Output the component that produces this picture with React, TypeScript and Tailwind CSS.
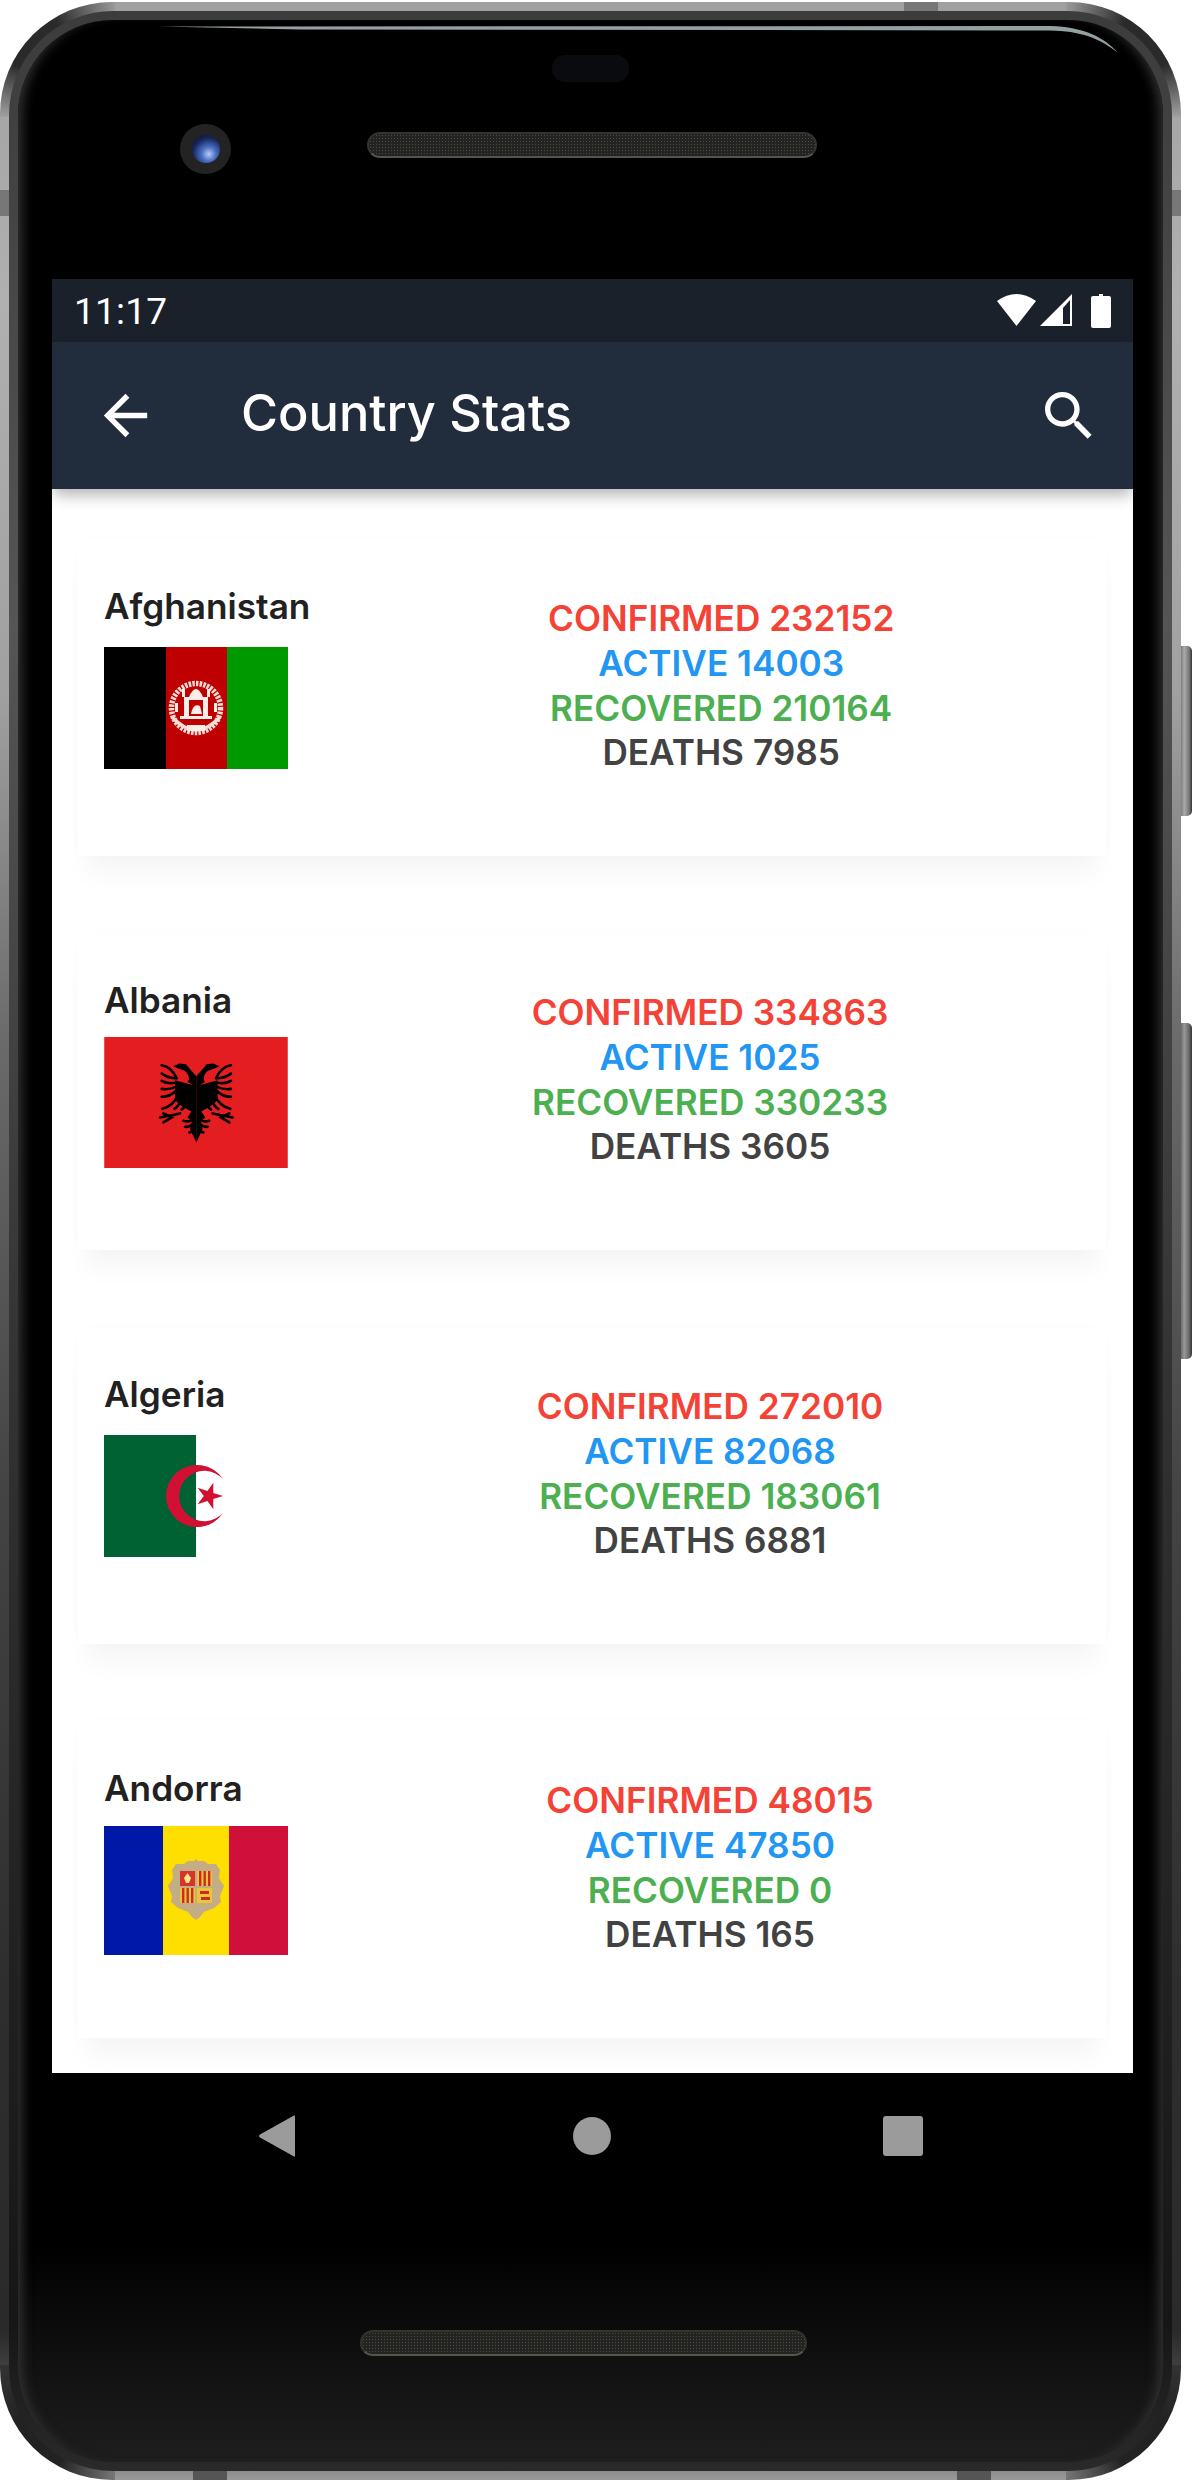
import React from "react";

const countries = [
  { name: "Afghanistan", c: 232152, a: 14003, r: 210164, d: 7985, flag: "af" },
  { name: "Albania", c: 334863, a: 1025, r: 330233, d: 3605, flag: "al" },
  { name: "Algeria", c: 272010, a: 82068, r: 183061, d: 6881, flag: "dz" },
  { name: "Andorra", c: 48015, a: 47850, r: 0, d: 165, flag: "ad" },
];

function FlagAF() {
  return (
    <svg viewBox="0 0 184 122" className="block w-[184px] h-[122px]">
      <rect width="62" height="122" fill="#000" />
      <rect x="62" width="61" height="122" fill="#bf0000" />
      <rect x="123" width="61" height="122" fill="#009900" />
      <g fill="none" stroke="#f6dcd4">
        <circle cx="92" cy="61" r="24.5" strokeWidth="5.5" strokeDasharray="2.5 1.2" />
        <path d="M68 70 Q92 96 116 70" strokeWidth="3.5" />
      </g>
      <g fill="#fbeee8">
        <rect x="80" y="50" width="24" height="3" />
        <rect x="80" y="53" width="5" height="16" />
        <rect x="99" y="53" width="5" height="16" />
        <path d="M85 50 Q92 34 99 50Z" />
        <rect x="78" y="42" width="3" height="8" />
        <rect x="103" y="42" width="3" height="8" />
        <rect x="76" y="69" width="32" height="3" />
        <path d="M87 67 Q89 56 96 59 L98 67Z" />
        <rect x="71" y="56" width="3" height="9" />
        <rect x="110" y="56" width="3" height="9" />
        <rect x="83" y="78" width="18" height="6" />
      </g>
    </svg>
  );
}

const eagleStrokes = [
  "M245 133 C262 136 280 150 290 172",
  "M245 158 C262 170 275 172 288 172",
  "M245 180 C262 190 275 188 288 185",
  "M245 204 C262 208 278 202 288 198",
  "M245 228 C262 228 280 218 290 208",
  "M247 264 C268 260 285 242 292 226",
  "M240 290 L300 278",
  "M250 278 L275 290 L250 305",
  "M310 300 C325 305 335 300 342 290",
  "M315 318 C328 320 338 310 344 302",
  "M328 335 C338 335 342 325 346 315",
  "M283 264 C290 262 298 250 300 242",
  "M305 266 C312 262 318 252 320 245",
];

function EagleHalf() {
  return (
    <g>
      <path d="M285 178 L349 195 L349 365 L330 325 L336 300 L322 290 L334 272 C318 262 298 256 285 235 Z" fill="#000" />
      <path d="M280 136 L298 128 L318 130 L335 150 L349 166 L349 200 L322 182 C332 180 326 156 312 149 L294 143 Z" fill="#000" />
      {eagleStrokes.map((d) => (
        <path key={d} d={d} fill="none" stroke="#000" strokeWidth="8" strokeLinecap="round" />
      ))}
    </g>
  );
}

function FlagAL() {
  return (
    <svg viewBox="72 48 552 394" className="block w-[184px] h-[131px]">
      <rect x="72" y="48" width="552" height="394" fill="#e41e20" />
      <EagleHalf />
      <g transform="translate(698 0) scale(-1 1)">
        <EagleHalf />
      </g>
    </svg>
  );
}

function FlagDZ() {
  return (
    <svg viewBox="0 0 184 122" className="block w-[184px] h-[122px]">
      <rect width="92" height="122" fill="#006233" />
      <rect x="92" width="92" height="122" fill="#fff" />
      <path d="M119 44.1 A31 31 0 1 0 119 77.9 A25.2 25.2 0 1 1 119 44.1Z" fill="#d21034" />
      <polygon
        points="119,61 109.3,64.1 109.3,74.3 103.4,66 93.7,69.2 99.7,61 93.7,52.8 103.4,56 109.3,47.7 109.3,57.9"
        fill="#d21034"
      />
    </svg>
  );
}

function FlagAD() {
  return (
    <svg viewBox="0 0 184 129" className="block w-[184px] h-[129px]">
      <rect width="59" height="129" fill="#0018a8" />
      <rect x="59" width="66" height="129" fill="#fedf00" />
      <rect x="125" width="59" height="129" fill="#d0103a" />
      <path
        d="M72 38 L80 38 L84 35 L90 35 L92 33 L94 35 L100 35 L104 38 L112 38 L116 44 L115 52 L120 60 L116 70 L117 76 L110 82 L100 86 L96 91 L92 94 L88 91 L84 86 L74 82 L67 76 L68 70 L64 60 L69 52 L68 44 Z"
        fill="#c4ac84"
      />
      <rect x="76" y="45" width="15" height="15" fill="#d8322a" />
      <path d="M83.5 47 L87 52 L85 57 L82 57 L80 52Z" fill="#fbe88a" />
      <rect x="93" y="45" width="15" height="15" fill="#e9c53a" />
      <rect x="76" y="62" width="15" height="15" fill="#e9c53a" />
      <rect x="93" y="62" width="15" height="15" fill="#e9c53a" />
      <g fill="#cf2a27">
        <rect x="95" y="45" width="2.4" height="15" />
        <rect x="99.5" y="45" width="2.4" height="15" />
        <rect x="104" y="45" width="2.4" height="15" />
        <rect x="78" y="62" width="2.4" height="15" />
        <rect x="82.5" y="62" width="2.4" height="15" />
        <rect x="87" y="62" width="2.4" height="15" />
        <rect x="96" y="65" width="9" height="3" />
        <rect x="97" y="71" width="9" height="3" />
      </g>
    </svg>
  );
}

function Flag({ code }: { code: string }) {
  return (
    <div className="w-[184px] h-[136px] flex items-center">
      {code === "af" && <FlagAF />}
      {code === "al" && <FlagAL />}
      {code === "dz" && <FlagDZ />}
      {code === "ad" && <FlagAD />}
    </div>
  );
}

function Speaker({ w }: { w: string }) {
  return (
    <div
      className={`${w} h-[26px] rounded-[13px] border-2 border-[#33332f] border-b-[#55554f] bg-[#232321] bg-[radial-gradient(#4c4c45_1px,transparent_1px)] bg-[length:3px_3px]`}
    />
  );
}

function Card({ item }: { item: (typeof countries)[number] }) {
  return (
    <div className="h-[316px] shrink-0 bg-white pl-[26px] pt-[42px] flex shadow-[0_26px_24px_-8px_rgba(0,0,0,0.04),0_0_20px_rgba(0,0,0,0.012)]">
      <div className="flex flex-col">
        <div className="h-[48px] leading-[48px] text-[35.2px] font-semibold text-[#212121] whitespace-nowrap">
          {item.name}
        </div>
        <div className="mt-[10px]">
          <Flag code={item.flag} />
        </div>
      </div>
      <div className="flex-1 -mr-[26px] pt-[14px] text-center text-[35.2px] leading-[44.8px] font-semibold whitespace-nowrap">
        <div className="text-[#f44336]">CONFIRMED {item.c}</div>
        <div className="text-[#2196f3]">ACTIVE {item.a}</div>
        <div className="text-[#4caf50]">RECOVERED {item.r}</div>
        <div className="text-[#424242]">DEATHS {item.d}</div>
      </div>
    </div>
  );
}

export default function App() {
  return (
    <div className="relative w-[1194px] h-[2480px] bg-white pt-[2px] font-['Inter',sans-serif] overflow-hidden">
      {/* side buttons */}
      <div className="absolute left-[1178px] top-[646px] w-[14px] h-[170px] rounded-r-[5px] bg-[linear-gradient(to_right,#555,#aaa_45%,#777_80%,#333)]" />
      <div className="absolute left-[1178px] top-[1023px] w-[14px] h-[336px] rounded-r-[5px] bg-[linear-gradient(to_right,#444,#999_45%,#666_80%,#333)]" />

      <div className="relative w-[1181px] h-[2478px] rounded-[112px] p-[9px] [background:conic-gradient(from_270deg_at_100%_100%,#a0a0a0,#2a2a2a_28deg,#2a2a2a_58deg,#999_90deg)_0_0/115px_115px_no-repeat,conic-gradient(from_0deg_at_0_100%,#999,#2a2a2a_32deg,#2a2a2a_62deg,#a0a0a0_90deg)_100%_0/115px_115px_no-repeat,conic-gradient(from_180deg_at_100%_0,#777,#222_30deg,#222_60deg,#333_90deg)_0_100%/115px_115px_no-repeat,conic-gradient(from_90deg_at_0_0,#333,#222_30deg,#222_60deg,#777_90deg)_100%_100%/115px_115px_no-repeat,linear-gradient(to_bottom,#a0a0a0_0%,#b0b0b0_12%,#a0a0a0_28%,#6a6a6a_42%,#444_60%,#2e2e2e_80%,#2a2a2a_94%,#777_99%,#999_100%)]">
        {/* frame joints */}
        <div className="absolute left-0 top-[188px] w-[18px] h-[26px] bg-[#777]" />
        <div className="absolute right-0 top-[188px] w-[18px] h-[26px] bg-[#777]" />
        <div className="absolute left-[904px] top-0 w-[34px] h-[18px] bg-[#777]" />
        <div className="absolute left-[193px] bottom-0 w-[34px] h-[16px] bg-[#555]" />
        <div className="absolute left-[957px] bottom-0 w-[34px] h-[16px] bg-[#555]" />
        <div className="relative h-full rounded-[104px] p-[9px] bg-[linear-gradient(to_bottom,#3c3c3c_0%,#555_25%,#333_55%,#161616_94%,#2a2a2a_100%)]">
          <div className="relative h-full rounded-[95px] px-[34px] pr-[30px] flex flex-col bg-[linear-gradient(to_bottom,#000_0%,#000_91%,#1e1e1e_100%)] shadow-[inset_12px_0_12px_-8px_#333,inset_-12px_0_12px_-8px_#333]">
            {/* top glass highlight */}
            <svg className="absolute left-0 top-0" width="1145" height="60" viewBox="18 20 1145 60">
              <path d="M159 26.5 L1050 26 C1085 27 1105 38 1118 53 C1100 38 1080 31 1050 30.5 L300 29.5 Z" fill="#93a1a3" />
            </svg>

            {/* top bezel */}
            <div className="h-[259px] shrink-0 pt-[35px]">
              <div className="ml-[500px] w-[77px] h-[27px] rounded-[13px] bg-[#0a0b0f]" />
              <div className="mt-[42px] flex items-start">
                <div className="ml-[128px] w-[51px] h-[50px] rounded-full bg-[#232323] flex items-center justify-center">
                  <div className="w-[28px] h-[28px] rounded-full bg-[radial-gradient(circle_at_60%_68%,#b8ccf5_0%,#4b6fc4_28%,#16275e_62%,#050a20_100%)]" />
                </div>
                <div className="ml-[136px] mt-[8px]">
                  <Speaker w="w-[450px]" />
                </div>
              </div>
            </div>

            {/* screen */}
            <div className="h-[1794px] shrink-0 flex flex-col bg-white overflow-hidden">
              <div className="h-[63px] shrink-0 bg-[#1a212b] flex items-center justify-between pl-[22px] pr-[22px]">
                <span className="font-['Roboto',sans-serif] text-[37px] text-white leading-none tracking-[0.2px] pt-[2px]">11:17</span>
                <div className="flex items-start gap-[4px] h-[34px]">
                  <svg width="39" height="32" viewBox="0 0 39 32">
                    <path d="M0 7 Q19.5 -7 39 7 L19.5 32 Z" fill="#fff" />
                  </svg>
                  <svg width="32" height="32" viewBox="0 0 32 32">
                    <path d="M0 32 L32 0 V32 Z" fill="#fff" />
                    <path d="M23 14 L30 6 V30 H23 Z" fill="#1a212b" />
                  </svg>
                  <svg className="ml-[15px]" width="20" height="34" viewBox="0 0 20 34">
                    <path d="M5 2 H8 V0 H12 V2 H18 Q20 2 20 4 V32 Q20 34 18 34 H2 Q0 34 0 32 V4 Q0 2 2 2 Z" fill="#fff" />
                  </svg>
                </div>
              </div>
              <div className="relative z-10 h-[147px] shrink-0 bg-[#212c3c] flex items-center pl-[41px] pr-[32px] shadow-[0_8px_14px_-2px_rgba(0,0,0,0.3)]">
                <svg width="65" height="65" viewBox="0 0 24 24" fill="#fff">
                  <path d="M20 11H7.83l5.59-5.59L12 4l-8 8 8 8 1.41-1.41L7.83 13H20v-2z" />
                </svg>
                <div className="ml-[83px] flex-1 text-[50.5px] font-medium text-white leading-none pb-[5px]">Country Stats</div>
                <svg width="64" height="64" viewBox="0 0 24 24" fill="#fff">
                  <path d="M15.5 14h-.79l-.28-.27C15.41 12.59 16 11.11 16 9.5 16 5.91 13.09 3 9.5 3S3 5.91 3 9.5 5.91 16 9.5 16c1.61 0 3.09-.59 4.23-1.57l.27.28v.79l5 4.99L20.49 19l-4.99-5zm-6 0C7.01 14 5 11.99 5 9.5S7.01 5 9.5 5 14 7.01 14 9.5 11.99 14 9.5 14z" />
                </svg>
              </div>
              <div className="flex-1 min-h-0 px-[26px] pr-[27px] pt-[51px] flex flex-col gap-[78px]">
                {countries.map((c) => (
                  <Card key={c.name} item={c} />
                ))}
              </div>
            </div>

            {/* bottom bezel */}
            <div className="flex-1 pt-[42px]">
              <div className="flex items-center pl-[207px] h-[42px]">
                <svg width="36" height="42" viewBox="0 0 36 42">
                  <path d="M35 0.5 Q36 0 36 1.5 V40.5 Q36 42 35 41.5 L1 22.5 Q-1 21 1 19.5 Z" fill="#9b9b9b" />
                </svg>
                <div className="ml-[278px] w-[38px] h-[38px] rounded-full bg-[#9b9b9b]" />
                <div className="ml-[272px] w-[40px] h-[40px] rounded-[3px] bg-[#9b9b9b]" />
              </div>
              <div className="ml-[308px] mt-[173px]">
                <Speaker w="w-[447px]" />
              </div>
            </div>
          </div>
        </div>
      </div>
    </div>
  );
}
